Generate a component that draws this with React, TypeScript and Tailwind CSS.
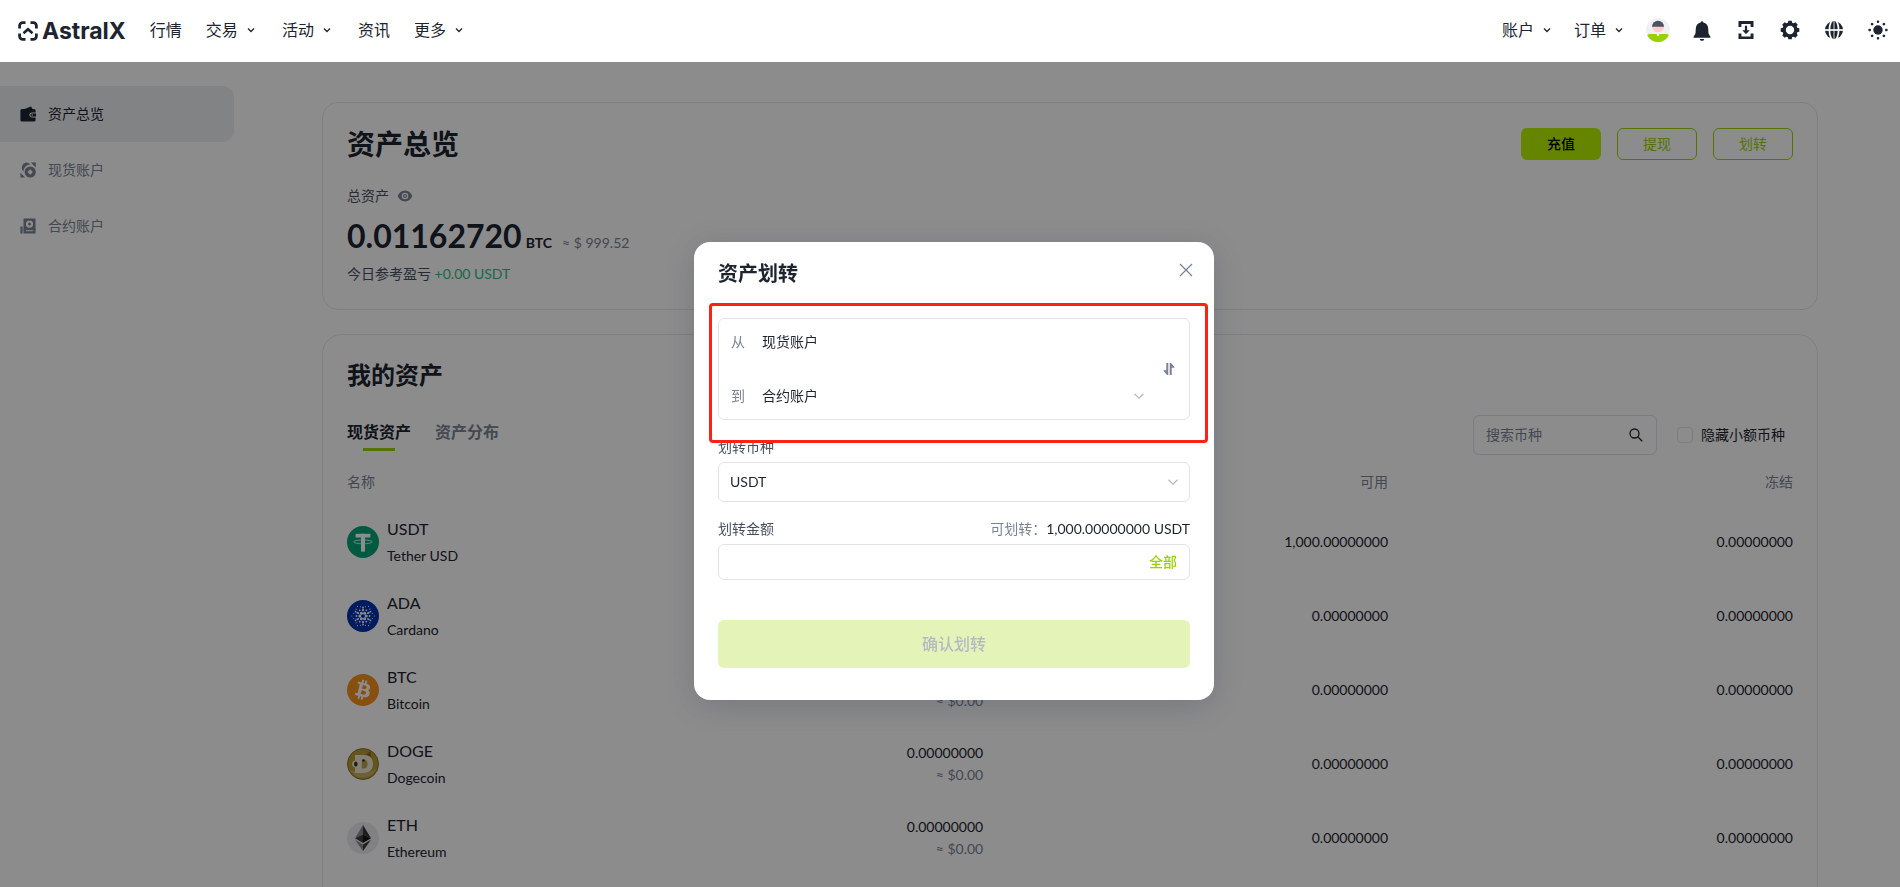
import React, { useState } from 'react';
import { SiBitcoin } from 'react-icons/si';

const WalletIcon: React.FC = () => (
  <svg width="16" height="16" viewBox="0 0 16 16" fill="currentColor" aria-hidden="true">
    <path d="M4.500 3 11 .4 12.600 3z" />
    <path fillRule="evenodd" d="M2 3h12a1.600 1.600 0 0 1 1.600 1.600v1.900h-3.800a2.500 2.500 0 0 0 0 5h3.800v2.400a1.600 1.600 0 0 1-1.600 1.600H2a1.600 1.600 0 0 1-1.600-1.600V4.600A1.600 1.600 0 0 1 2 3z" />
    <path fillRule="evenodd" d="M12 7.400h4v3.200h-4a1.600 1.600 0 0 1 0-3.200zm.2.900a.7.7 0 1 0 0 1.400.7.7 0 0 0 0-1.400z" />
  </svg>
);

const SpotIcon: React.FC = () => (
  <svg width="16" height="16" viewBox="0 0 16 16" fill="currentColor" aria-hidden="true">
    <path d="M6 .6c1.700 0 3.200.8 4.200 2A7 7 0 0 0 3.400 9.800 5.400 5.400 0 0 1 6 .6z" />
    <path fillRule="evenodd" d="M10.200 4.400a5.600 5.600 0 1 1 0 11.200 5.600 5.600 0 0 1 0-11.200zm0 2.900L7.500 10l2.700 2.700 2.700-2.700z" />
    <path d="M10.800.5h5v5zM.4 10.800v4.700h4.700z" />
  </svg>
);

const ContractIcon: React.FC = () => (
  <svg width="16" height="16" viewBox="0 0 16 16" fill="currentColor" aria-hidden="true">
    <path fillRule="evenodd" d="M3.500.5h12V12H3.500zM9.500 2.500a3.600 3.600 0 1 0 0 7.200 3.600 3.600 0 0 0 0-7.200z" />
    <path d="m9.500 4.300 1.800 1.800-1.800 1.800-1.800-1.800z" />
    <path fillRule="evenodd" d="M3.500 11h12v4.500h-12zm2.300 1.300v1h7.400v-1z" />
    <path d="M.4 8.500h2.200v7H.4z" />
  </svg>
);

const EyeIcon: React.FC = () => (
  <svg width="16" height="16" viewBox="0 0 16 16" fill="currentColor" aria-hidden="true">
    <path fillRule="evenodd" d="M8 2.500c3.300 0 6 2.200 7.300 5.500-1.300 3.300-4 5.500-7.300 5.500S2 11.300.7 8C2 4.700 4.700 2.500 8 2.500zm0 2.200a3.300 3.300 0 1 0 0 6.600 3.300 3.300 0 0 0 0-6.600z" />
    <path fillRule="evenodd" d="M8 5.900a2.100 2.100 0 1 1 0 4.200 2.100 2.100 0 0 1 0-4.200zm0 1.200a.9.900 0 1 0 0 1.800.9.900 0 0 0 0-1.800z" />
  </svg>
);

const LogoMark: React.FC = () => (
  <svg width="20" height="20" viewBox="0 0 20 20" fill="none" stroke="currentColor" strokeWidth="2.800" aria-hidden="true">
    <path d="M1.600 7.500V4.800a3.200 3.200 0 0 1 3.200-3.200h2.700M12.500 1.600h2.700a3.200 3.200 0 0 1 3.200 3.200v2.700M18.400 12.500v2.700a3.200 3.200 0 0 1-3.200 3.200h-2.700M7.500 18.400H4.800a3.200 3.200 0 0 1-3.200-3.200v-2.700" />
    <path d="m5.500 12.300 4.500-4 4.500 4" strokeWidth="2.600" />
  </svg>
);

const NavChevron: React.FC = () => (
  <svg width="14" height="14" viewBox="0 0 14 14" fill="none" stroke="currentColor" strokeWidth="1.300" aria-hidden="true">
    <path d="m4 5.500 3 3 3-3" />
  </svg>
);

const SelectChevron: React.FC<{ className?: string }> = ({ className }) => (
  <svg className={className} width="12" height="12" viewBox="0 0 12 12" fill="none" stroke="currentColor" strokeWidth="1.200" aria-hidden="true">
    <path d="m1.500 3.800 4.500 4.400 4.500-4.400" />
  </svg>
);

const Avatar: React.FC = () => (
  <svg width="24" height="24" viewBox="0 0 24 24" aria-hidden="true">
    <circle cx="12" cy="12" r="12" fill="#f0f1f4" />
    <path d="M1.300 17.400C2 16.500 3 16 4.500 16h15c1.500 0 2.500.5 3.200 1.400A12 12 0 0 1 1.300 17.400z" fill="#99d100" />
    <path d="M10.800 15.500h2.400v1.700L12 18.200l-1.200-1z" fill="#fff" />
    <circle cx="12" cy="8.400" r="6" fill="#ffcdc9" />
    <path d="M6 8.800a6 6 0 1 1 12 0z" fill="#4b5261" />
  </svg>
);

const BellIcon: React.FC = () => (
  <svg width="24" height="24" viewBox="0 0 24 24" fill="currentColor" aria-hidden="true">
    <path d="M12 3.200c.8 0 1.200.6 1.300 1.400 3 .7 4.700 2.900 4.900 5.800l.3 5.100 1.900 3.300v1H3.600v-1l1.900-3.300.3-5.100c.2-2.900 1.900-5.100 4.900-5.800.1-.8.5-1.400 1.300-1.400z" />
    <path d="M9.700 20.900h4.600c-.3 1.200-1.200 1.900-2.300 1.900s-2-.7-2.300-1.900z" />
  </svg>
);

const DownloadIcon: React.FC = () => (
  <svg width="24" height="24" viewBox="0 0 24 24" fill="currentColor" aria-hidden="true">
    <path d="M4.500 3h15v6h-2.900V6H7.400v3H4.500zM4.500 21h15v-5.500h-2.900v2.900H7.400v-2.900H4.500z" />
    <path d="M10.900 7.800h2.200v4.400h2.700L12 16l-3.800-3.800h2.700z" />
  </svg>
);

const GearIcon: React.FC = () => (
  <svg width="24" height="24" viewBox="0 0 24 24" aria-hidden="true">
    {[0, 45, 90, 135].map((a) => (
      <path key={a} d="M10.300 2.700h3.400l.7 3.300H9.600zM10.300 21.300h3.400l.7-3.300H9.600z" fill="currentColor" transform={`rotate(${a} 12 12)`} />
    ))}
    <circle cx="12" cy="12" r="5.900" fill="none" stroke="currentColor" strokeWidth="3.400" />
  </svg>
);

const GlobeIcon: React.FC = () => (
  <svg width="24" height="24" viewBox="0 0 24 24" aria-hidden="true">
    <circle cx="12" cy="12" r="9" fill="currentColor" />
    <g fill="none" stroke="#fff" strokeWidth="1.700">
      <ellipse cx="12" cy="12" rx="4.600" ry="10.500" />
      <path d="M2 12h20" />
      <path d="M12 2v20" strokeWidth=".8" />
    </g>
  </svg>
);

const SunIcon: React.FC = () => (
  <svg width="24" height="24" viewBox="0 0 24 24" fill="currentColor" aria-hidden="true">
    <circle cx="12" cy="12" r="4.700" />
    {[0, 45, 90, 135, 180, 225, 270, 315].map((a) => (
      <rect key={a} x="10.800" y="2.400" width="2.400" height="2.500" rx=".8" transform={`rotate(${a} 12 12)`} />
    ))}
  </svg>
);

const SwapIcon: React.FC = () => (
  <svg width="12" height="14" viewBox="0 0 12 14" fill="currentColor" aria-hidden="true">
    <path d="M3.300 1h2v12h-1.300L.6 9v-.8h2.700zM6.700 13h2V5.800h2.700V5L8 1H6.700z" />
  </svg>
);

const TetherIcon: React.FC = () => (
  <svg width="32" height="32" viewBox="0 0 32 32" aria-hidden="true">
    <circle cx="16" cy="16" r="16" fill="#00a478" />
    <rect x="8.600" y="7.800" width="14.800" height="3.700" fill="#fff" />
    <rect x="14" y="7.800" width="4" height="17.800" fill="#fff" />
    <ellipse cx="16" cy="15.900" rx="9.300" ry="1.900" fill="none" stroke="#fff" strokeWidth=".8" />
  </svg>
);

const CardanoIcon: React.FC = () => {
  const rings = [
    { n: 6, r: 3.2, s: 1.5, o: 0 },
    { n: 6, r: 5.6, s: 0.9, o: 30 },
    { n: 12, r: 6.6, s: 0.9, o: 0 },
    { n: 6, r: 8.6, s: 0.9, o: 30 },
    { n: 12, r: 9.6, s: 0.6, o: 15 },
    { n: 6, r: 11.2, s: 0.6, o: 0 },
  ];
  return (
    <svg width="32" height="32" viewBox="0 0 32 32" aria-hidden="true">
      <circle cx="16" cy="16" r="16" fill="#0033ad" />
      {rings.map((ring, i) =>
        Array.from({ length: ring.n }, (_, k) => {
          const a = ((ring.o + (360 / ring.n) * k) * Math.PI) / 180;
          return <circle key={`${i}-${k}`} cx={16 + ring.r * Math.cos(a)} cy={16 + ring.r * Math.sin(a)} r={ring.s} fill="#fff" />;
        })
      )}
    </svg>
  );
};

const BitcoinIcon: React.FC = () => (
  <span className="block rounded-full bg-white text-[#f7931a]">
    <SiBitcoin size={32} />
  </span>
);

const DogeIcon: React.FC = () => (
  <svg width="32" height="32" viewBox="0 0 32 32" aria-hidden="true">
    <circle cx="16" cy="16" r="15.500" fill="#b79c3a" stroke="#8c7520" />
    <path d="M3 22c4 6 9 8 14 7.500 6-.5 10-4 12-9-5 4-9 5-13 4.500z" fill="#c9b06a" />
    <path d="M19 6.500 23.500 3l.6 6z" fill="#8a6a2a" />
    <path d="M8 7h9c5.500 0 9 3.600 9 9s-3.500 9-9 9H8v-5.500c-1.800-.4-3-1.800-3-3.500s1.200-3.100 3-3.500z" fill="#efe8d2" />
    <path d="M14.800 11.500H17c2.200 0 3.600 1.800 3.600 4.500S19.200 20.500 17 20.500h-2.200z" fill="#b99f55" />
    <ellipse cx="8.800" cy="16" rx="1.700" ry="2.600" fill="#3a3120" />
    <circle cx="16.500" cy="12.500" r="1.200" fill="#3a3120" />
  </svg>
);

const EthIcon: React.FC = () => (
  <svg width="32" height="32" viewBox="0 0 32 32" aria-hidden="true">
    <circle cx="16" cy="16" r="16" fill="#ececf0" />
    <path d="M16 3v9.600l-8 3.600z" fill="#8b8b8b" />
    <path d="M16 3v9.600l8 3.600z" fill="#353535" />
    <path d="m8 16.200 8-3.600v8.300z" fill="#3c3c3b" />
    <path d="m24 16.200-8-3.600v8.300z" fill="#141414" />
    <path d="m8 17.800 8 4.700V29z" fill="#8b8b8b" />
    <path d="m24 17.800-8 4.700V29z" fill="#3c3c3b" />
  </svg>
);

const navLinks = [
  { name: '行情', menu: false },
  { name: '交易', menu: true },
  { name: '活动', menu: true },
  { name: '资讯', menu: false },
  { name: '更多', menu: true },
];

const tools = [
  { label: '个人中心', icon: <Avatar /> },
  { label: '通知', icon: <BellIcon /> },
  { label: '下载', icon: <DownloadIcon /> },
  { label: '设置', icon: <GearIcon /> },
  { label: '语言', icon: <GlobeIcon /> },
  { label: '主题', icon: <SunIcon /> },
];

const assets = [
  { symbol: 'USDT', name: 'Tether USD', icon: <TetherIcon />, total: '1,000.00000000', usd: '$1,000.00', free: '1,000.00000000' },
  { symbol: 'ADA', name: 'Cardano', icon: <CardanoIcon />, total: '0.00000000', usd: '$0.00', free: '0.00000000' },
  { symbol: 'BTC', name: 'Bitcoin', icon: <BitcoinIcon />, total: '0.00000000', usd: '$0.00', free: '0.00000000' },
  { symbol: 'DOGE', name: 'Dogecoin', icon: <DogeIcon />, total: '0.00000000', usd: '$0.00', free: '0.00000000' },
  { symbol: 'ETH', name: 'Ethereum', icon: <EthIcon />, total: '0.00000000', usd: '$0.00', free: '0.00000000' },
];

const NavItem: React.FC<{ name: string; menu: boolean }> = ({ name, menu }) => (
  <a href="#" className="flex items-center gap-1.5 text-base leading-6">
    {name}
    {menu && <NavChevron />}
  </a>
);

const Header: React.FC = () => (
  <header className="relative z-50 flex h-[62px] items-center justify-between bg-white pr-2.5 pb-0.5 pl-[18px]">
    <div className="flex items-center gap-6">
      <a href="#" className="flex items-center gap-1 pt-0.5">
        <LogoMark />
        <span className="font-[Inter] text-[23px] leading-6 font-bold">AstralX</span>
      </a>
      <nav className="flex items-center gap-6">
        {navLinks.map((link) => (
          <NavItem key={link.name} {...link} />
        ))}
      </nav>
    </div>
    <div className="flex items-center gap-5">
      <NavItem name="账户" menu />
      <NavItem name="订单" menu />
      {tools.map((tool) => (
        <button key={tool.label} type="button" aria-label={tool.label}>
          {tool.icon}
        </button>
      ))}
    </div>
  </header>
);

const Sidebar: React.FC = () => {
  const items = [
    { name: '资产总览', icon: <WalletIcon />, active: true },
    { name: '现货账户', icon: <SpotIcon />, active: false },
    { name: '合约账户', icon: <ContractIcon />, active: false },
  ];
  return (
    <aside className="w-60 shrink-0 pt-6 pr-1.5">
      {items.map((item) => (
        <a
          key={item.name}
          href="#"
          className={`flex h-14 items-center gap-3 rounded-r-xl pl-5 text-sm ${
            item.active ? 'bg-[#edeef2] text-[#1d2430]' : 'text-[#7a8394]'
          }`}
        >
          {item.icon}
          {item.name}
        </a>
      ))}
    </aside>
  );
};

const Overview: React.FC = () => (
  <section className="rounded-2xl border border-[#e6e8ec] px-6 pt-[25px] pb-[23px]">
    <div className="flex items-center justify-between">
      <h1 className="text-[28px] leading-8 font-bold">资产总览</h1>
      <div className="flex gap-4">
        <button type="button" className="h-8 w-20 rounded-md bg-[#b9f300] text-sm font-medium text-black">充值</button>
        <button type="button" className="h-8 w-20 rounded-md border border-[#99d100] text-sm text-[#99d100]">提现</button>
        <button type="button" className="h-8 w-20 rounded-md border border-[#99d100] text-sm text-[#99d100]">划转</button>
      </div>
    </div>
    <div className="mt-6 flex items-center gap-2 text-sm leading-6 text-[#474f5e]">
      总资产
      <button type="button" aria-label="显示资产" className="text-[#7a8394]">
        <EyeIcon />
      </button>
    </div>
    <div className="mt-2 flex items-baseline leading-10">
      <span className="text-[32px] font-bold">0.01162720</span>
      <span className="ml-1 text-sm font-bold">BTC</span>
      <span className="ml-2.5 text-sm text-[#7a8394]">≈ $ 999.52</span>
    </div>
    <p className="mt-1.5 text-sm leading-6 text-[#474f5e]">
      今日参考盈亏 <span className="text-[#2ebd85]">+0.00 USDT</span>
    </p>
  </section>
);

const MyAssets: React.FC = () => (
  <section className="mt-6 rounded-[20px] border border-[#e6e8ec] p-6 pb-12">
    <h2 className="text-2xl leading-8 font-bold">我的资产</h2>
    <div className="mt-6 flex items-center justify-between">
      <div className="flex gap-6 text-base leading-6 font-bold">
        <button type="button" className="flex flex-col items-center gap-1">
          现货资产
          <span className="h-[3px] w-8 bg-[#99d100]" />
        </button>
        <button type="button" className="flex flex-col items-center text-[#7a8394]">资产分布</button>
      </div>
      <div className="flex items-center gap-5 pr-2">
        <label className="flex h-10 w-46 items-center justify-between rounded-md border border-[#e0e2e7] px-3">
          <input type="text" aria-label="搜索币种" placeholder="搜索币种" className="w-28 bg-transparent text-sm outline-none placeholder:text-[#7a8394]" />
          <svg width="16" height="16" viewBox="0 0 16 16" fill="none" stroke="currentColor" strokeWidth="1.300" aria-hidden="true">
            <circle cx="6.500" cy="6.500" r="4.500" />
            <path d="m9.800 9.800 4.400 4.400" />
          </svg>
        </label>
        <label className="flex items-center gap-2 text-sm">
          <input type="checkbox" className="size-4 appearance-none rounded border border-[#e0e2e7]" />
          隐藏小额币种
        </label>
      </div>
    </div>
    <table className="mt-4 w-full table-fixed text-right text-sm">
      <colgroup>
        <col className="w-[20%]" />
        <col className="w-[24%]" />
        <col className="w-[28%]" />
        <col className="w-[28%]" />
      </colgroup>
      <thead className="leading-[22px] text-[#7a8394]">
        <tr className="h-[34px] align-top">
          <th className="text-left font-normal">名称</th>
          <th className="font-normal">总额</th>
          <th className="font-normal">可用</th>
          <th className="font-normal">冻结</th>
        </tr>
      </thead>
      <tbody>
        {assets.map((asset) => (
          <tr key={asset.symbol} className="h-[74px]">
            <td>
              <div className="flex items-center gap-2 text-left">
                {asset.icon}
                <div>
                  <p className="text-base leading-7">{asset.symbol}</p>
                  <p className="leading-[26px]">{asset.name}</p>
                </div>
              </div>
            </td>
            <td className="leading-[22px]">
              <p>{asset.total}</p>
              <p className="text-[#7a8394]">≈ {asset.usd}</p>
            </td>
            <td>{asset.free}</td>
            <td>0.00000000</td>
          </tr>
        ))}
      </tbody>
    </table>
  </section>
);

const TransferDialog: React.FC = () => {
  const [amount, setAmount] = useState('');

  return (
    <div role="dialog" aria-modal="true" aria-labelledby="transfer-title" className="w-[520px] rounded-2xl bg-white px-6 pt-4 pb-8 shadow-[0_6px_32px_rgba(50,60,85,0.25)]">
      <div className="flex items-start justify-between">
        <h2 id="transfer-title" className="text-xl leading-[30px] font-bold">资产划转</h2>
        <button type="button" aria-label="关闭" className="mt-1 -mr-1 text-[#7a8394]">
          <svg width="16" height="16" viewBox="0 0 16 16" fill="none" stroke="currentColor" strokeWidth="1.300" aria-hidden="true">
            <path d="m2 2 12 12M14 2 2 14" />
          </svg>
        </button>
      </div>

      <div className="relative mt-[30px] flex h-[102px] items-center rounded-md border border-[#e2e4e9] px-3 text-sm">
        <div className="pointer-events-none absolute -top-4 -right-[19px] -bottom-6 -left-[10px] rounded-sm border-[3px] border-[#ff2114]" />
        <div className="flex flex-1 flex-col gap-[30px]">
          <div className="flex items-center leading-6">
            <span className="w-[31px] text-[#7a8394]">从</span>
            <span>现货账户</span>
          </div>
          <div className="relative flex items-center leading-6">
            <label htmlFor="to-account" className="w-[31px] text-[#7a8394]">到</label>
            <select id="to-account" className="flex-1 appearance-none bg-transparent">
              <option>合约账户</option>
            </select>
            <SelectChevron className="pointer-events-none absolute right-0 text-[#b4b8c4]" />
          </div>
        </div>
        <button type="button" aria-label="互换" className="ml-4 px-0.5 text-[#7a8394]">
          <SwapIcon />
        </button>
      </div>

      <label htmlFor="coin" className="mt-4 block text-sm leading-[22px] text-[#474f5e]">划转币种</label>
      <div className="relative mt-1 flex items-center">
        <select id="coin" className="h-10 w-full appearance-none rounded-md border border-[#e2e4e9] bg-transparent px-[11px] text-sm">
          <option>USDT</option>
        </select>
        <SelectChevron className="pointer-events-none absolute right-[11px] text-[#b4b8c4]" />
      </div>

      <div className="mt-4 flex justify-between text-sm leading-[22px]">
        <label htmlFor="amount" className="text-[#474f5e]">划转金额</label>
        <p>
          <span className="text-[#7a8394]">可划转：</span>1,000.00000000 USDT
        </p>
      </div>
      <div className="mt-1 flex h-9 items-center rounded-md border border-[#e2e4e9] px-3 text-sm">
        <input id="amount" type="text" value={amount} onChange={(e) => setAmount(e.target.value)} className="min-w-0 flex-1 outline-none" />
        <button type="button" className="font-medium text-[#99d100]" onClick={() => setAmount('1000')}>全部</button>
      </div>

      <button type="button" disabled className="mt-10 h-12 w-full rounded-md bg-[#e4f4b8] text-base font-medium text-[#b5b9c4]">
        确认划转
      </button>
    </div>
  );
};

const App: React.FC = () => (
  <div className="h-screen overflow-hidden bg-white font-['Lato','Noto_Sans_CJK_SC',sans-serif] text-[#1d2430]">
    <Header />
    <div className="flex">
      <Sidebar />
      <main className="min-w-0 flex-1 px-[82px] pt-10">
        <Overview />
        <MyAssets />
      </main>
    </div>
    <div className="fixed inset-0 z-40 flex items-center justify-center bg-black/45 pt-[55px] pl-2">
      <TransferDialog />
    </div>
  </div>
);

export default App;
